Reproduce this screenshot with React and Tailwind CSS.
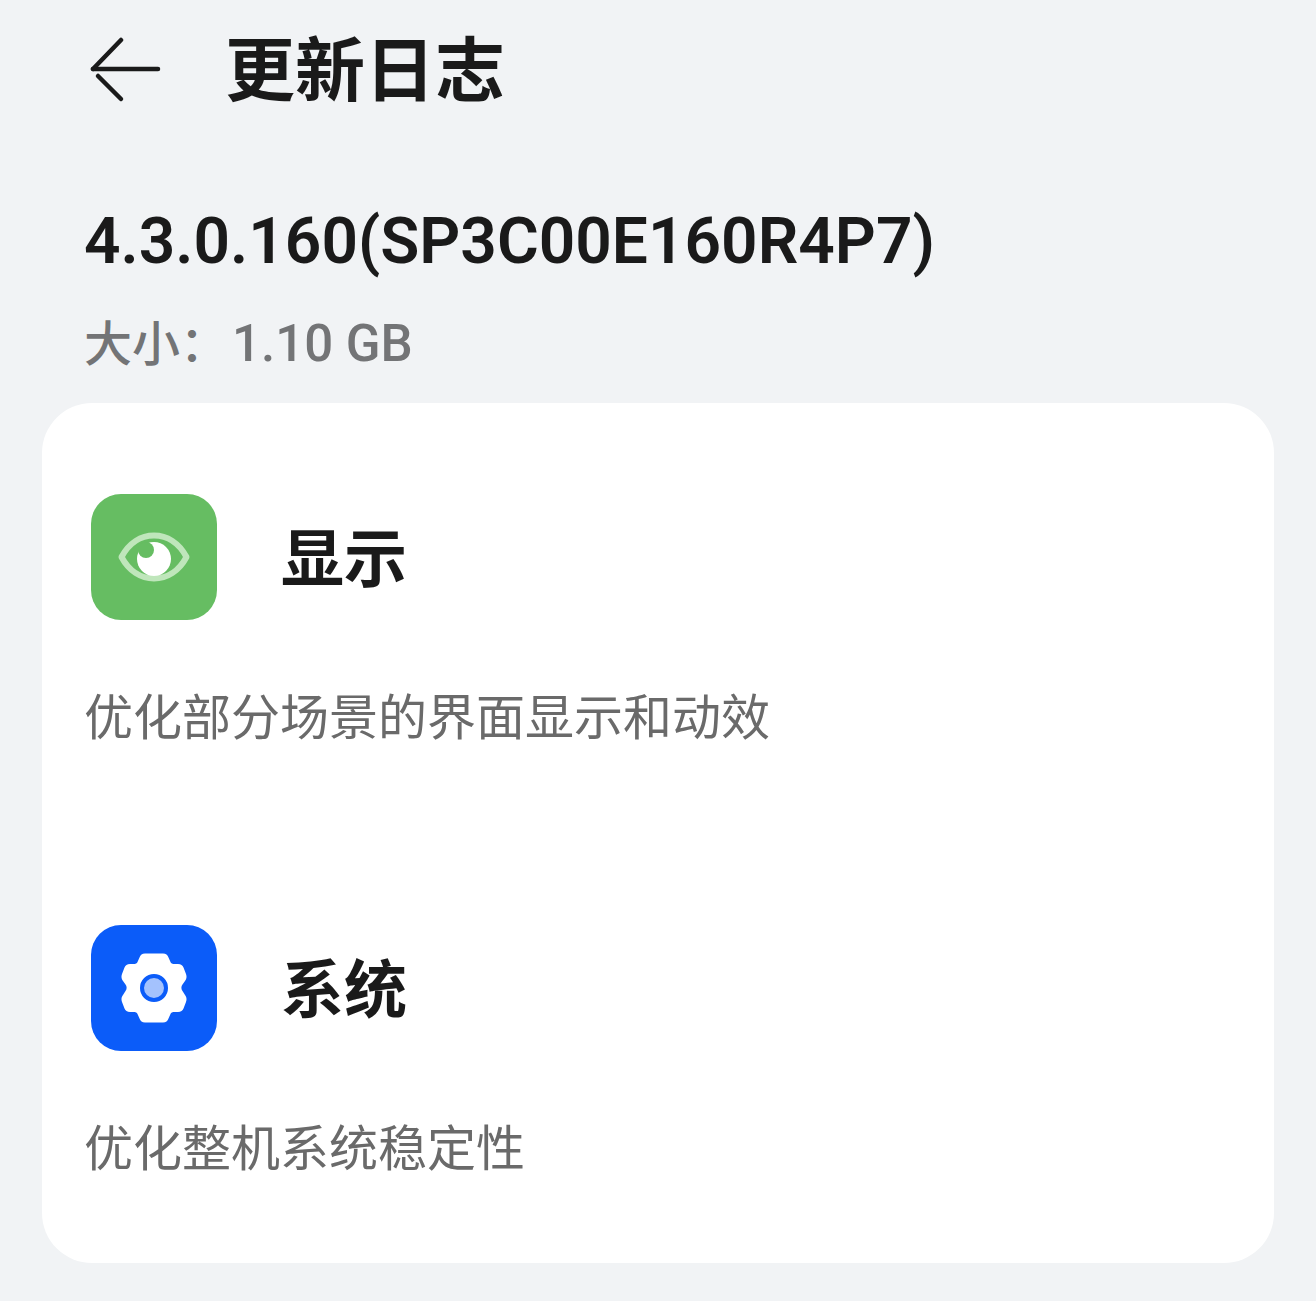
const cjk = { fontFamily: '"Roboto", "Noto Sans CJK SC", sans-serif' };

function BackArrow() {
  return (
    <svg width="72" height="66" viewBox="0 0 72 66" fill="none" stroke="#1a1a1a" strokeWidth="4.5" strokeLinecap="round" strokeLinejoin="round">
      <path d="M3 32H68" />
      <path d="M31 3L3 32" />
      <path d="M8 39L31 62" />
    </svg>
  );
}

function EyeIcon() {
  return (
    <div className="flex h-[126px] w-[126px] shrink-0 items-center justify-center rounded-[30px] bg-[#66bd62]">
      <svg width="72" height="50" viewBox="0 0 72 50" fill="none">
        <path d="M3.500 25C11 11 23 3.500 36 3.500C49 3.500 61 11 68.500 25C61 39 49 46.500 36 46.500C23 46.500 11 39 3.500 25Z" stroke="#bfe6bb" strokeWidth="6" strokeLinejoin="round" />
        <circle cx="36" cy="27" r="17" fill="#fff" />
        <circle cx="28" cy="18" r="8" fill="#66bd62" />
      </svg>
    </div>
  );
}

function GearIcon() {
  return (
    <div className="flex h-[126px] w-[126px] shrink-0 items-center justify-center rounded-[30px] bg-[#0b5cf9]">
      <svg width="66" height="70" viewBox="0 0 66 70">
        <path d="M24 0.500H42C45 0.500 46.500 2 47.500 4.500L49.500 9C50 10.500 51.500 11 53.500 11H57C60 11 61.500 12.500 62.500 14.500L65 21C66 24 65.500 26 64 28L61.500 31.500C60 33.500 60 36 61.500 38L64 42C65.500 44 66 46 65 49L62.500 55.500C61.500 57.500 60 59 57 59H53.500C51.500 59 50 59.500 49.500 61L47.500 65.500C46.500 68 45 69.500 42 69.500H24C21 69.500 19.500 68 18.500 65.500L16.500 61C16 59.500 14.500 59 12.500 59H9C6 59 4.500 57.500 3.500 55.500L1 49C0 46 0.500 44 2 42L4.500 38C6 36 6 33.500 4.500 31.500L2 28C0.500 26 0 24 1 21L3.500 14.500C4.500 12.500 6 11 9 11H12.500C14.500 11 16 10.500 16.500 9L18.500 4.500C19.500 2 21 0.500 24 0.500Z" fill="#fff" />
        <circle cx="33" cy="35" r="12" fill="#a4c2fd" stroke="#0b5cf9" strokeWidth="4" />
      </svg>
    </div>
  );
}

function Section({ icon, title, desc, className }) {
  return (
    <section className={className}>
      <div className="flex items-center gap-[64px] pl-[49px]">
        {icon}
        <h2 className="h-[126px] pt-[3px] text-[63px] font-bold leading-[126px] text-[#1a1a1a]">{title}</h2>
      </div>
      <p className="mt-[66px] pl-[42px] text-[49px] leading-[66px] text-[#6a6a6a]">{desc}</p>
    </section>
  );
}

export default function App() {
  return (
    <div className="h-[1301px] w-[1316px] overflow-hidden bg-[#f1f3f5]" style={cjk}>
      <header className="flex h-[140px] items-center gap-[63px] pl-[90px]">
        <BackArrow />
        <h1 className="h-[80px] pt-[2px] text-[70px] font-bold leading-[80px] text-[#1a1a1a]">更新日志</h1>
      </header>
      <div className="pl-[84px]">
        <div className="mt-[57px] text-[64px] font-semibold leading-[90px] text-[#1a1a1a]">4.3.0.160(SP3C00E160R4P7)</div>
        <div className="mt-[24px] text-[48px] font-medium leading-[66px] text-[#737476]">
          大小：<span className="ml-[4px] text-[51px]">1.10 GB</span>
        </div>
      </div>
      <main className="mx-[42px] mt-[25px] h-[860px] rounded-[50px] bg-white pt-[91px]">
        <Section icon={<EyeIcon />} title="显示" desc="优化部分场景的界面显示和动效" />
        <Section className="mt-[173px]" icon={<GearIcon />} title="系统" desc="优化整机系统稳定性" />
      </main>
    </div>
  );
}
